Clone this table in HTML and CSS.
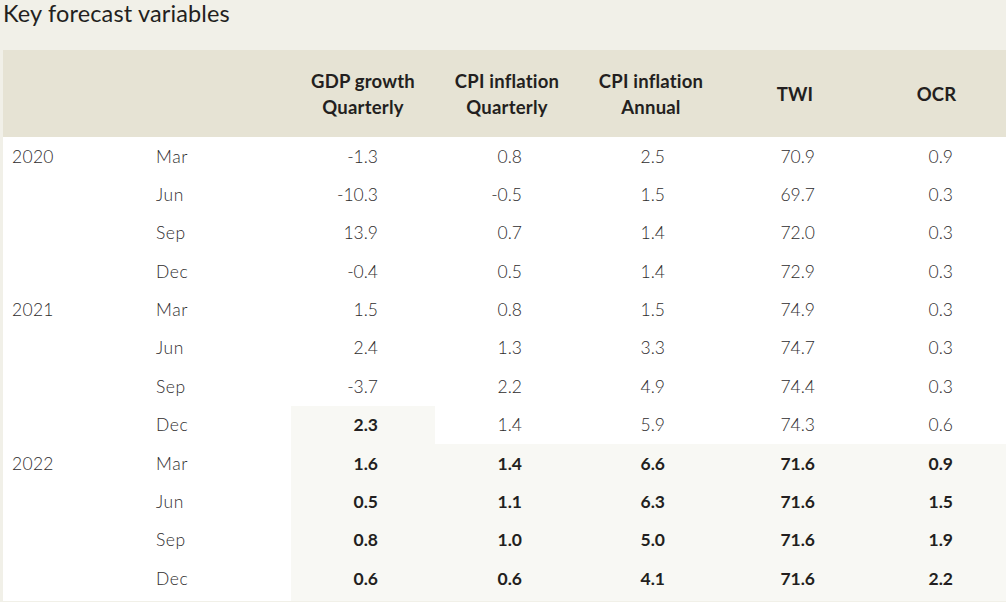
FILE: index.html
```html
<!DOCTYPE html>
<html lang="en">
<head>
<meta charset="utf-8">
<title>Key forecast variables</title>
<link rel="stylesheet" href="styles.css">
</head>
<body>
<div class="page">
  <h2 class="title">Key forecast variables</h2>
  <table class="ftable">
    <colgroup>
      <col class="c-year"><col class="c-month"><col class="c-num"><col class="c-num"><col class="c-num"><col class="c-num"><col class="c-last">
    </colgroup>
    <thead>
      <tr>
        <th></th><th></th>
        <th>GDP growth<br>Quarterly</th>
        <th>CPI inflation<br>Quarterly</th>
        <th>CPI inflation<br>Annual</th>
        <th>TWI</th>
        <th>OCR</th>
      </tr>
    </thead>
    <tbody>
      <tr><td class="yr">2020</td><td class="mo">Mar</td><td class="n1">-1.3</td><td class="n2">0.8</td><td class="n3">2.5</td><td class="n4">70.9</td><td class="n5">0.9</td></tr>
      <tr><td class="yr"></td><td class="mo">Jun</td><td class="n1">-10.3</td><td class="n2">-0.5</td><td class="n3">1.5</td><td class="n4">69.7</td><td class="n5">0.3</td></tr>
      <tr><td class="yr"></td><td class="mo">Sep</td><td class="n1">13.9</td><td class="n2">0.7</td><td class="n3">1.4</td><td class="n4">72.0</td><td class="n5">0.3</td></tr>
      <tr><td class="yr"></td><td class="mo">Dec</td><td class="n1">-0.4</td><td class="n2">0.5</td><td class="n3">1.4</td><td class="n4">72.9</td><td class="n5">0.3</td></tr>
      <tr><td class="yr">2021</td><td class="mo">Mar</td><td class="n1">1.5</td><td class="n2">0.8</td><td class="n3">1.5</td><td class="n4">74.9</td><td class="n5">0.3</td></tr>
      <tr><td class="yr"></td><td class="mo">Jun</td><td class="n1">2.4</td><td class="n2">1.3</td><td class="n3">3.3</td><td class="n4">74.7</td><td class="n5">0.3</td></tr>
      <tr><td class="yr"></td><td class="mo">Sep</td><td class="n1">-3.7</td><td class="n2">2.2</td><td class="n3">4.9</td><td class="n4">74.4</td><td class="n5">0.3</td></tr>
      <tr><td class="yr"></td><td class="mo">Dec</td><td class="n1 fc">2.3</td><td class="n2">1.4</td><td class="n3">5.9</td><td class="n4">74.3</td><td class="n5">0.6</td></tr>
      <tr class="fr"><td class="yr">2022</td><td class="mo">Mar</td><td class="n1 fc">1.6</td><td class="n2 fc">1.4</td><td class="n3 fc">6.6</td><td class="n4 fc">71.6</td><td class="n5 fc">0.9</td></tr>
      <tr class="fr"><td class="yr"></td><td class="mo">Jun</td><td class="n1 fc">0.5</td><td class="n2 fc">1.1</td><td class="n3 fc">6.3</td><td class="n4 fc">71.6</td><td class="n5 fc">1.5</td></tr>
      <tr class="fr"><td class="yr"></td><td class="mo">Sep</td><td class="n1 fc">0.8</td><td class="n2 fc">1.0</td><td class="n3 fc">5.0</td><td class="n4 fc">71.6</td><td class="n5 fc">1.9</td></tr>
      <tr class="fr last"><td class="yr"></td><td class="mo">Dec</td><td class="n1 fc">0.6</td><td class="n2 fc">0.6</td><td class="n3 fc">4.1</td><td class="n4 fc">71.6</td><td class="n5 fc">2.2</td></tr>
    </tbody>
  </table>
</div>
</body>
</html>
```

FILE: styles.css
```css
html, body {
  margin: 0;
  padding: 0;
  background: #f1f0e8;
  overflow: hidden;
}

body {
  font-family: "Lato", "Open Sans", sans-serif;
  color: #2a2828;
}

.page {
  width: 1006px;
  height: 602px;
  padding-left: 3px;
  box-sizing: border-box;
}

.title {
  margin: 0;
  height: 50px;
  font-size: 23.5px;
  font-weight: 400;
  line-height: 26px;
  color: #231f20;
  letter-spacing: 0.15px;
}

.ftable {
  table-layout: fixed;
  border-collapse: collapse;
  border-spacing: 0;
  width: 1003px;
  background: #ffffff;
  font-size: 17.5px;
}

.c-year { width: 143px; }
.c-month { width: 145px; }
.c-num { width: 144px; }
.c-last { width: 139px; }

.ftable thead th {
  background: #e6e3d4;
  height: 87px;
  padding: 0;
  font-weight: 700;
  font-size: 18.5px;
  line-height: 26px;
  letter-spacing: 0.2px;
  text-align: center;
  vertical-align: middle;
  color: #231f20;
}

.ftable tbody td {
  height: 38.36px;
  padding-top: 1px;
  padding-bottom: 0;
  padding-left: 0;
  padding-right: 0;
  box-sizing: border-box;
  line-height: 20px;
  vertical-align: middle;
  white-space: nowrap;
  font-weight: 300;
  color: #2e2c2d;
}

.ftable tbody tr.last td {
  height: 42px;
  padding-bottom: 3.6px;
}

.ftable tbody td.yr { padding-left: 9px; letter-spacing: 0.3px; }
.ftable tbody td.mo { padding-left: 10px; letter-spacing: 0.6px; }

.n1, .n2, .n3, .n4, .n5 { text-align: right; }
.ftable tbody td.n1 { padding-right: 57px; }
.ftable tbody td.n2 { padding-right: 57px; }
.ftable tbody td.n3 { padding-right: 58px; }
.ftable tbody td.n4 { padding-right: 52px; }
.ftable tbody td.n5 { padding-right: 53px; }

.ftable tbody td.fc {
  background: #f8f8f4;
  font-weight: 700;
  color: #231f20;
}
```
